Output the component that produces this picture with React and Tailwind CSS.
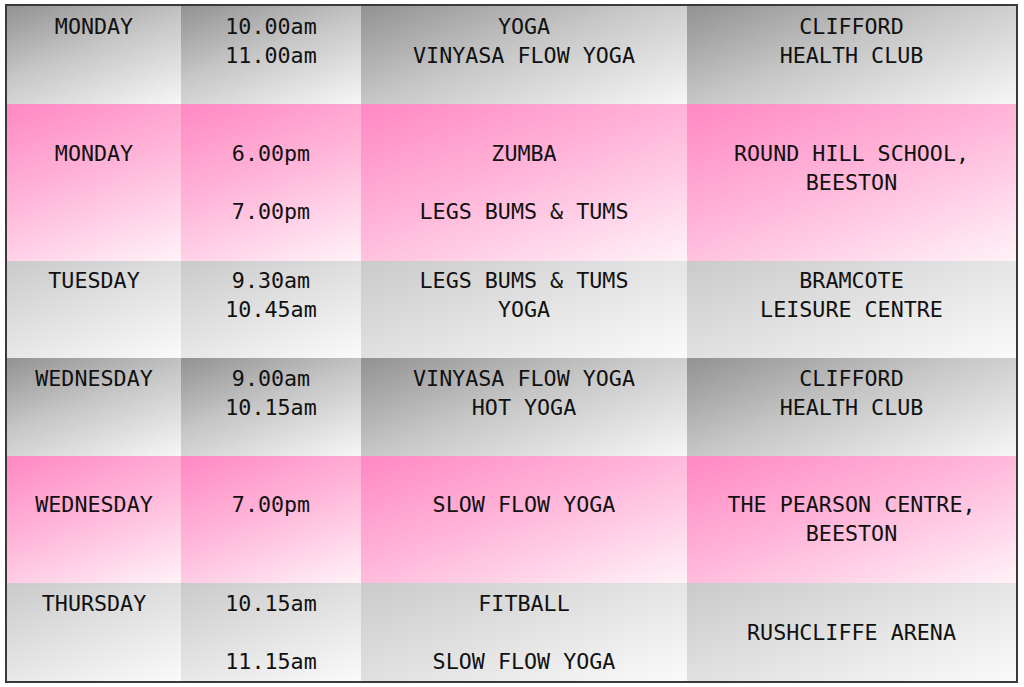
import React from "react";

const rows = [
  {
    type: "dark",
    h: "h-[98px]",
    pt: "pt-[6px]",
    cells: [["MONDAY"], ["10.00am", "11.00am"], ["YOGA", "VINYASA FLOW YOGA"], ["CLIFFORD", "HEALTH CLUB"]],
  },
  {
    type: "pink",
    h: "h-[157px]",
    pt: "pt-[35px]",
    cells: [["MONDAY"], ["6.00pm", "\u00a0", "7.00pm"], ["ZUMBA", "\u00a0", "LEGS BUMS & TUMS"], ["ROUND HILL SCHOOL,", "BEESTON"]],
  },
  {
    type: "light",
    h: "h-[97px]",
    pt: "pt-[5px]",
    cells: [["TUESDAY"], ["9.30am", "10.45am"], ["LEGS BUMS & TUMS", "YOGA"], ["BRAMCOTE", "LEISURE CENTRE"]],
  },
  {
    type: "dark",
    h: "h-[98px]",
    pt: "pt-[6px]",
    cells: [["WEDNESDAY"], ["9.00am", "10.15am"], ["VINYASA FLOW YOGA", "HOT YOGA"], ["CLIFFORD", "HEALTH CLUB"]],
  },
  {
    type: "pink",
    h: "h-[127px]",
    pt: "pt-[34px]",
    cells: [["WEDNESDAY"], ["7.00pm"], ["SLOW FLOW YOGA"], ["THE PEARSON CENTRE,", "BEESTON"]],
  },
  {
    type: "light",
    h: "h-[98px]",
    pt: "pt-[6px]",
    cells: [["THURSDAY"], ["10.15am", "\u00a0", "11.15am"], ["FITBALL", "\u00a0", "SLOW FLOW YOGA"], ["\u00a0", "RUSHCLIFFE ARENA"]],
  },
];

const bg = {
  dark: "bg-[linear-gradient(160deg,#929292,#c6c6c6_45%,#f6f6f6)]",
  light: "bg-[linear-gradient(160deg,#cacaca,#e0e0e0_45%,#fafafa)]",
  pink: "bg-[linear-gradient(160deg,#ff88c3,#ffb4d8_45%,#fff2f8)]",
};

export default function App() {
  return (
    <div className="w-[1024px] h-[687px] bg-white pt-[4px] pl-[5px]">
      <div
        className="w-[1013px] border-2 border-[#3a3a3a] grid grid-cols-[174px_180px_326px_329px] text-[#111] text-[21.7px] leading-[29px]"
        style={{ fontFamily: '"DejaVu Sans Mono", "Liberation Mono", monospace' }}
      >
        {rows.map((r, ri) =>
          r.cells.map((lines, ci) => (
            <div key={ri + "-" + ci} className={`${r.h} ${r.pt} ${bg[r.type]} flex flex-col items-center text-center`}>
              {lines.map((l, li) => (
                <div key={li} className="whitespace-pre">
                  {l}
                </div>
              ))}
            </div>
          ))
        )}
      </div>
    </div>
  );
}
